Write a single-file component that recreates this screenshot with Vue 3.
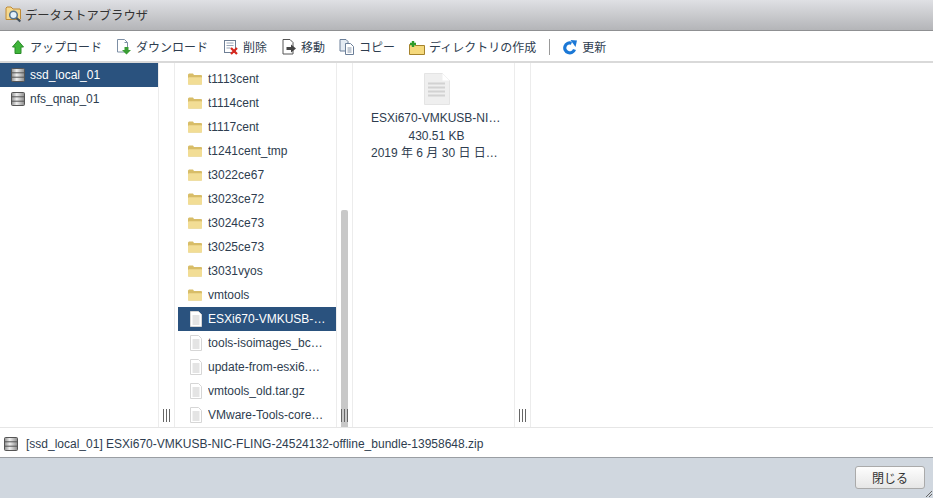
<template>
  <div class="browser">
    <header class="title-bar">
      <svg class="title-icon" width="20" height="20" viewBox="0 0 20 20">
        <path d="M1 3l1-1h4l2 2h7l.5 1v9l-.5.5H1z" fill="#f5d98e" stroke="#c08a35" />
        <circle cx="8.500" cy="10" r="3.800" fill="#e3f1fb" stroke="#55758f" stroke-width="1.500" />
        <path d="M11.500 13l3.800 3.500" stroke="#46535f" stroke-width="2.200" />
      </svg>
      <span class="title-text">データストアブラウザ</span>
    </header>

    <nav class="toolbar">
      <button class="tool">
        <svg width="16" height="16" viewBox="0 0 16 16">
          <path d="M8 1.500l5.500 6.500H11v6.500H5V8H2.500z" fill="#3fb53a" stroke="#2b8a28" />
        </svg>
        <span>アップロード</span>
      </button>
      <button class="tool">
        <svg width="16" height="16" viewBox="0 0 16 16">
          <path d="M1.500.5h7l3 3V13h-10z" fill="#fff" stroke="#7d8fa5" />
          <path d="M8.500 3.500h3" stroke="#7d8fa5" />
          <path d="M8.500 8h4v3H15l-4.500 4.500L6 11h2.500z" fill="#3a9e35" />
        </svg>
        <span>ダウンロード</span>
      </button>
      <button class="tool delete">
        <svg width="16" height="16" viewBox="0 0 16 16">
          <rect x="1.500" y="1.500" width="11" height="12" fill="#fff" stroke="#6e7f95" />
          <path d="M3.500 4h7M3.500 6.500h7M3.500 9h4" stroke="#99a6b8" />
          <path d="M8 9l6 6M14 9l-6 6" stroke="#d8281e" stroke-width="2.200" />
        </svg>
        <span>削除</span>
      </button>
      <button class="tool">
        <svg width="16" height="16" viewBox="0 0 16 16">
          <path d="M2 .5h7l3 3V15H2z" fill="#fff" stroke="#555" />
          <path d="M5.500 8h4.500V5.500l5 4-5 4V11H5.500z" fill="#444" />
        </svg>
        <span>移動</span>
      </button>
      <button class="tool">
        <svg width="16" height="16" viewBox="0 0 16 16">
          <path d="M1 .5h6l2 2V12H1z" fill="#e4ebf3" stroke="#6b7f99" />
          <path d="M6.500 4.500h5l3 3v8h-8z" fill="#fff" stroke="#6b7f99" />
          <path d="M8.500 9h4M8.500 11h4M8.500 13h4" stroke="#8595aa" />
        </svg>
        <span>コピー</span>
      </button>
      <button class="tool">
        <svg width="16" height="16" viewBox="0 0 16 16">
          <path d="M.5 5.500h5l1 1h9v9H.5z" fill="#f5d97c" stroke="#a5832c" />
          <path d="M4 2v6M1 5h6" stroke="#2f9c2a" stroke-width="2.400" />
        </svg>
        <span>ディレクトリの作成</span>
      </button>
      <span class="tool-sep"></span>
      <button class="tool">
        <svg width="16" height="16" viewBox="0 0 16 16">
          <path d="M12.500 10.500A5 5 0 1 1 9.500 4.200" fill="none" stroke="#1b78d6" stroke-width="3.200" />
          <path d="M8.500 1l6.500.5-1.500 6.500z" fill="#1b78d6" />
        </svg>
        <span>更新</span>
      </button>
    </nav>

    <main class="columns">
      <section class="column stores">
        <ul class="rows">
          <li v-for="store in stores" :key="store.name" class="row" :class="{ selected: store.selected }">
            <svg class="ic" width="16" height="16" viewBox="0 0 16 16">
              <rect x="1.500" y="1.500" width="13" height="13" rx="1" fill="url(#disk)" stroke="#555" />
              <path d="M1.500 5.800h13M1.500 10.200h13" stroke="#555" />
              <defs>
                <linearGradient id="disk" x1="0" x2="1" y1="0" y2="0">
                  <stop offset="0" stop-color="#8f8f8f" />
                  <stop offset="0.4" stop-color="#eeeeee" />
                  <stop offset="1" stop-color="#8a8a8a" />
                </linearGradient>
              </defs>
            </svg>
            <span class="name">{{ store.name }}</span>
          </li>
        </ul>
        <div class="handle"><span class="grip"></span></div>
      </section>

      <section class="column folders">
        <ul class="rows">
          <li v-for="item in items" :key="item.name" class="row" :class="{ selected: item.selected }">
            <svg v-if="item.folder" class="ic" width="16" height="16" viewBox="0 0 16 16">
              <path d="M1 3.500l1-1h4l1 1.500h7.500l.5 1V13l-.5.5h-13L1 13z" fill="#d8bd68" />
              <path d="M1 7l.8-.8h12.900l.3.8v6l-.5.5h-13L1 13z" fill="#f2dd95" />
            </svg>
            <svg v-else class="ic" width="16" height="16" viewBox="0 0 16 16">
              <path d="M3.500.5h8l3 3v12h-11z" fill="#fff" stroke="#d6d6d6" />
              <path d="M5.500 5h7M5.500 7h7M5.500 9h7M5.500 11h7M5.500 13h7" stroke="#c9c9c9" />
            </svg>
            <span class="name">{{ item.name }}</span>
          </li>
        </ul>
        <div class="handle">
          <span class="scroll-thumb"></span>
          <span class="grip"></span>
        </div>
      </section>

      <section class="column detail">
        <div class="file-info">
          <svg class="big-doc" width="26" height="32" viewBox="0 0 26 32">
            <path d="M.5.500h18l7 7v24H.5z" fill="#efefef" stroke="#e4e4e4" />
            <path d="M18.500.5v7h7z" fill="#fff" />
            <path d="M4 10.500h17M4 14.500h17M4 18.500h17M4 22.500h17" stroke="#d2d2d2" stroke-width="2" />
          </svg>
          <div class="info-line">ESXi670-VMKUSB-NIC-FLING-24524132</div>
          <div class="info-line">430.51 KB</div>
          <div class="info-line">2019 年 6 月 30 日 日曜日 12:00:00</div>
        </div>
        <div class="handle"><span class="grip"></span></div>
      </section>
      <section class="column blank"></section>
    </main>

    <div class="path-bar">
      <svg width="16" height="16" viewBox="0 0 16 16">
        <rect x="1.500" y="1.500" width="13" height="13" rx="1" fill="url(#disk)" stroke="#555" />
        <path d="M1.500 5.800h13M1.500 10.200h13" stroke="#555" />
      </svg>
      <span>[ssd_local_01] ESXi670-VMKUSB-NIC-FLING-24524132-offline_bundle-13958648.zip</span>
    </div>

    <footer class="footer">
      <button class="close">閉じる</button>
      <svg class="resizer" width="8" height="8" viewBox="0 0 8 8">
        <path d="M1 7l6-6M4 7l3-3" stroke="#666" />
      </svg>
    </footer>
  </div>
</template>

<script setup>
const stores = [
  { name: 'ssd_local_01', selected: true },
  { name: 'nfs_qnap_01' },
]

const items = [
  { name: 't1113cent', folder: true },
  { name: 't1114cent', folder: true },
  { name: 't1117cent', folder: true },
  { name: 't1241cent_tmp', folder: true },
  { name: 't3022ce67', folder: true },
  { name: 't3023ce72', folder: true },
  { name: 't3024ce73', folder: true },
  { name: 't3025ce73', folder: true },
  { name: 't3031vyos', folder: true },
  { name: 'vmtools', folder: true },
  { name: 'ESXi670-VMKUSB-NIC-FLING-24524132', selected: true },
  { name: 'tools-isoimages_bcm-6.7.0.zip' },
  { name: 'update-from-esxi6.7-6.7_update03.zip' },
  { name: 'vmtools_old.tar.gz' },
  { name: 'VMware-Tools-core-11.0.1-14773994.zip' },
]
</script>

<style scoped>
.browser {
  width: 933px;
  height: 498px;
  display: flex;
  flex-direction: column;
  overflow: hidden;
  background: #fff;
  color: #2e3d4f;
  font-family: "Liberation Sans", "Noto Sans CJK JP", sans-serif;
  font-size: 12px;
}

.title-bar {
  height: 31px;
  flex: none;
  display: flex;
  align-items: center;
  padding-left: 5px;
  box-sizing: border-box;
  background: linear-gradient(#dfe0e4, #b4b5b8);
  border-bottom: 1px solid #8f9092;
}

.title-text {
  font-size: 12.300px;
  color: #333;
}

.toolbar {
  height: 32px;
  flex: none;
  display: flex;
  align-items: center;
  padding: 1px 0 0 10px;
  box-sizing: border-box;
  border-bottom: 2px solid #d9d9d9;
}

.tool {
  display: flex;
  align-items: center;
  gap: 4px;
  padding: 0;
  margin-right: 14px;
  border: 0;
  background: none;
  color: inherit;
  font: inherit;
}

.tool.delete {
  margin-left: 1px;
}

.tool-sep {
  width: 1px;
  height: 16px;
  margin: 0 12px 0 -1px;
  background: #999;
}

.columns {
  height: 365px;
  flex: none;
  display: flex;
  box-sizing: border-box;
  border-bottom: 1px solid #e6e6e6;
}

.column {
  display: flex;
  flex: none;
}

.stores {
  width: 175px;
}

.folders {
  width: 178px;
  padding-left: 3px;
  box-sizing: border-box;
}

.folders .rows {
  padding-top: 4px;
}

.detail {
  width: 178px;
}

.blank {
  flex: 1;
}

.rows {
  flex: 1;
  min-width: 0;
  margin: 0;
  padding: 0;
  list-style: none;
}

.row {
  height: 24px;
  display: flex;
  align-items: center;
  gap: 5px;
  padding-left: 9px;
}

.stores .row {
  padding-left: 10px;
  gap: 4px;
}

.row.selected {
  background: #2a527e;
  color: #fff;
}

.ic {
  flex: none;
}

.name {
  flex: 1;
  min-width: 0;
  padding-right: 9.500px;
  white-space: nowrap;
  overflow: hidden;
  text-overflow: ellipsis;
}

.handle {
  position: relative;
  width: 17px;
  flex: none;
  box-sizing: border-box;
  border-left: 1px solid #ececec;
  border-right: 1px solid #ececec;
}

.grip {
  position: absolute;
  left: 4px;
  bottom: 5px;
  width: 7px;
  height: 13px;
  background: repeating-linear-gradient(90deg, #666 0 1px, transparent 1px 3px);
}

.scroll-thumb {
  position: absolute;
  left: 4px;
  top: 147px;
  bottom: 0;
  width: 7px;
  border-radius: 2px 2px 0 0;
  background: #c8c8c8;
}

.file-info {
  flex: 1;
  min-width: 0;
  padding: 10px 12px 0 18px;
  text-align: center;
  line-height: 17.500px;
}

.big-doc {
  display: block;
  margin: 0 auto 5px;
}

.info-line {
  white-space: nowrap;
  overflow: hidden;
  text-overflow: ellipsis;
}

.path-bar {
  height: 29px;
  flex: none;
  display: flex;
  align-items: center;
  gap: 7px;
  padding: 3px 0 0 3px;
  box-sizing: border-box;
}

.footer {
  position: relative;
  height: 41px;
  flex: none;
  display: flex;
  align-items: flex-start;
  justify-content: flex-end;
  padding: 8px 8px 0 0;
  box-sizing: border-box;
  background: #d0d7df;
  border-top: 1px solid #9a9ea3;
}

.close {
  width: 70px;
  height: 23px;
  padding: 0;
  border: 1px solid #aaa;
  border-radius: 3px;
  background: linear-gradient(#fdfdfd, #e6e6e6);
  color: #333;
  font: inherit;
}

.resizer {
  position: absolute;
  right: 0;
  bottom: 0;
}
</style>
